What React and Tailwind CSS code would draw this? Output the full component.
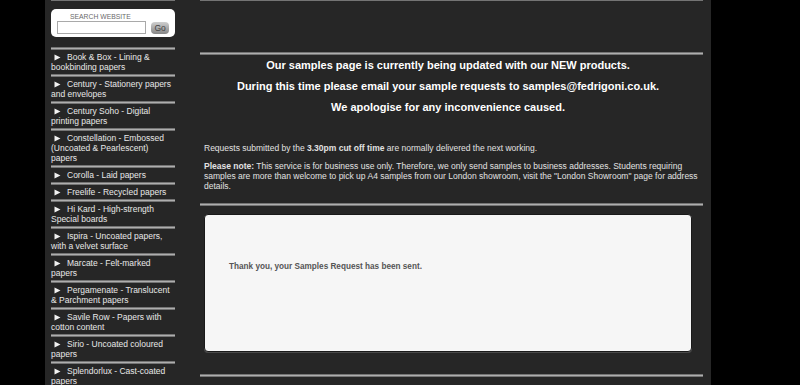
const ranges = [
  ["Book & Box - Lining &", "bookbinding papers"],
  ["Century - Stationery papers", "and envelopes"],
  ["Century Soho - Digital", "printing papers"],
  ["Constellation - Embossed", "(Uncoated & Pearlescent)", "papers"],
  ["Corolla - Laid papers"],
  ["Freelife - Recycled papers"],
  ["Hi Kard - High-strength", "Special boards"],
  ["Ispira - Uncoated papers,", "with a velvet surface"],
  ["Marcate - Felt-marked", "papers"],
  ["Pergamenate - Translucent", "& Parchment papers"],
  ["Savile Row - Papers with", "cotton content"],
  ["Sirio - Uncoated coloured", "papers"],
  ["Splendorlux - Cast-coated", "papers"],
];

const Rule = ({ className = "" }) => (
  <div className={`h-[3px] bg-[#aeaeae] border-t border-[#555] border-b border-[#747474] ${className}`} />
);

const RangeItem = ({ lines }) => (
  <li>
    <Rule />
    <div className="pt-[2px] pb-[2px] text-[8.5px] leading-[10px] text-[#e8e8e8] whitespace-nowrap">
      {lines.map((line, i) => (
        <div key={i} className="h-[10px] flex">
          {i === 0 && (
            <span className="w-[16px] shrink-0 pl-[3px] pt-[2px]">
              <svg width="7" height="7" viewBox="0 0 7 7" className="block">
                <path d="M0.5 0.5 L6.5 3.5 L0.5 6.5 Z" fill="#f2f2f2" />
              </svg>
            </span>
          )}
          <span>{line}</span>
        </div>
      ))}
    </div>
  </li>
);

const Sidebar = () => (
  <aside className="w-[124px] ml-[6px] shrink-0">
    <Rule className="-mt-[2px]" />
    {/* search */}
    <div className="mt-[8px] h-[28px] bg-white rounded-[5px] px-[6px] pt-[4px]">
      <div className="pl-[13px] text-[6.8px] leading-[7px] text-[#6a6a6a]">SEARCH WEBSITE</div>
      <div className="flex items-center gap-[5px] mt-[1px]">
        <div className="w-[90px] h-[13px] border border-[#a9a9a9] bg-white" />
        <button className="w-[18px] h-[12px] rounded-[4px] bg-gradient-to-b from-[#cfcfcf] to-[#868686] text-[8.5px] leading-[12px] text-[#444] text-center">
          Go
        </button>
      </div>
    </div>
    <ul className="mt-[10px]">
      {ranges.map((lines, i) => (
        <RangeItem key={i} lines={lines} />
      ))}
    </ul>
  </aside>
);

export default function App() {
  return (
    <div className="w-[800px] h-[385px] bg-black overflow-hidden flex font-['Liberation_Sans',Arial,sans-serif]">
      <div className="w-[45px] shrink-0" />
      <div className="w-[666px] h-full bg-[#262626] flex shrink-0">
        <Sidebar />
        <main className="ml-[25px] w-[503px] shrink-0">
          <Rule className="-mt-[2px]" />
          <Rule className="mt-[51px]" />
          <div className="pl-[4px] pr-[11px]">
            <div className="text-center font-bold text-[11px] leading-[21px] text-white">
              <p>Our samples page is currently being updated with our NEW products.</p>
              <p>During this time please email your sample requests to samples@fedrigoni.co.uk.</p>
              <p>We apologise for any inconvenience caused.</p>
            </div>
            <p className="mt-[25px] text-[8.5px] leading-[10px] text-[#e2e2e2]">
              Requests submitted by the <b>3.30pm cut off time</b> are normally delivered the next working.
            </p>
            <div className="mt-[8px] text-[8.5px] leading-[10px] text-[#e2e2e2] whitespace-nowrap">
              <p>
                <b>Please note:</b> This service is for business use only. Therefore, we only send samples to business addresses. Students requiring
              </p>
              <p>samples are more than welcome to pick up A4 samples from our London showroom, visit the "London Showroom" page for address</p>
              <p>details.</p>
            </div>
          </div>
          <Rule className="mt-[12px]" />
          <div className="ml-[4px] mt-[8px] w-[488px] h-[138px] bg-[#f6f6f6] rounded-[4px] border border-[#1a1a1a] shadow-[0_1px_0_#4a4a4a]">
            <p className="pl-[24px] pt-[47px] text-[8.2px] leading-[10px] font-bold text-[#555]">
              Thank you, your Samples Request has been sent.
            </p>
          </div>
          <Rule className="mt-[22px]" />
        </main>
      </div>
    </div>
  );
}
